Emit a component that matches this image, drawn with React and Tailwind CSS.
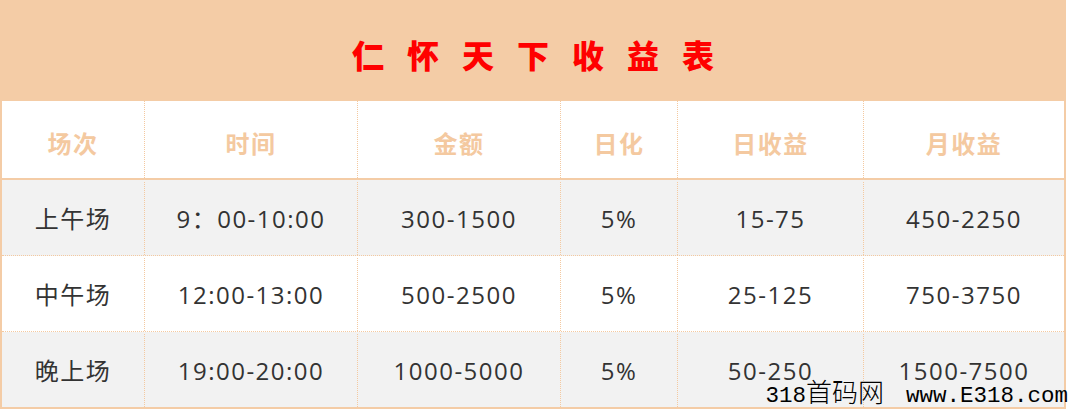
import React from 'react';

const cols = ['w-[143px]', 'w-[213px]', 'w-[203px]', 'w-[117px]', 'w-[186px]', 'flex-1'];

const headers = ['场次', '时间', '金额', '日化', '日收益', '月收益'];

const rows = [
    ['上午场', '9：00-10:00', '300-1500', '5%', '15-75', '450-2250'],
    ['中午场', '12:00-13:00', '500-2500', '5%', '25-125', '750-3750'],
    ['晚上场', '19:00-20:00', '1000-5000', '5%', '50-250', '1500-7500'],
];

const Cell = ({ i, children, className }) => (
    <div
        className={`${cols[i]} h-full flex items-center justify-center ${
            i < 5 ? 'border-r border-dotted border-[#f4c9a0]' : ''
        } ${className || ''}`}
    >
        {children}
    </div>
);

export default function App() {
    return (
        <div className="relative w-[1068px] h-[409px] overflow-hidden bg-white">
            <div className="w-[1066px] h-[409px] border-2 border-t-0 border-[#f4cca6] flex flex-col">
                <div className="h-[101px] bg-[#f4cca6] flex items-center justify-center pt-[6px]">
                    <span
                        className="text-[32px] font-black text-[#ff0000] tracking-[23px] pl-[23px]"
                        style={{ fontFamily: '"Noto Sans CJK SC", sans-serif' }}
                    >
                        仁怀天下收益表
                    </span>
                </div>
                <div
                    className="h-[79px] flex border-b-2 border-[#f4cca6] text-[24px] font-bold text-[#f4c9a0] tracking-[1.5px]"
                    style={{ fontFamily: '"Noto Sans CJK SC", sans-serif' }}
                >
                    {headers.map((h, i) => (
                        <Cell key={i} i={i} className="pt-[6px]">{h}</Cell>
                    ))}
                </div>
                {rows.map((r, ri) => (
                    <div
                        key={ri}
                        className={`flex-1 flex text-[24px] text-[#333333] tracking-[1.5px] pt-[2px] ${
                            ri % 2 === 0 ? 'bg-[#f2f2f2]' : 'bg-white'
                        } ${ri < 2 ? 'border-b border-dotted border-[#f4c9a0]' : ''}`}
                        style={{ fontFamily: '"Open Sans", "Noto Sans CJK SC", sans-serif' }}
                    >
                        {r.map((c, i) => (
                            <Cell key={i} i={i}>{c}</Cell>
                        ))}
                    </div>
                ))}
            </div>
            <div
                className="absolute right-0 bottom-0 text-[22.5px] text-black leading-[26px] whitespace-nowrap"
                style={{ fontFamily: '"Liberation Mono", "Noto Sans CJK SC", monospace' }}
            >
                318<span className="text-[26px] font-light" style={{ fontFamily: '"Noto Sans CJK SC", serif' }}>首码网</span>
                <span className="pl-[22px]">www.E318.com</span>
            </div>
        </div>
    );
}
